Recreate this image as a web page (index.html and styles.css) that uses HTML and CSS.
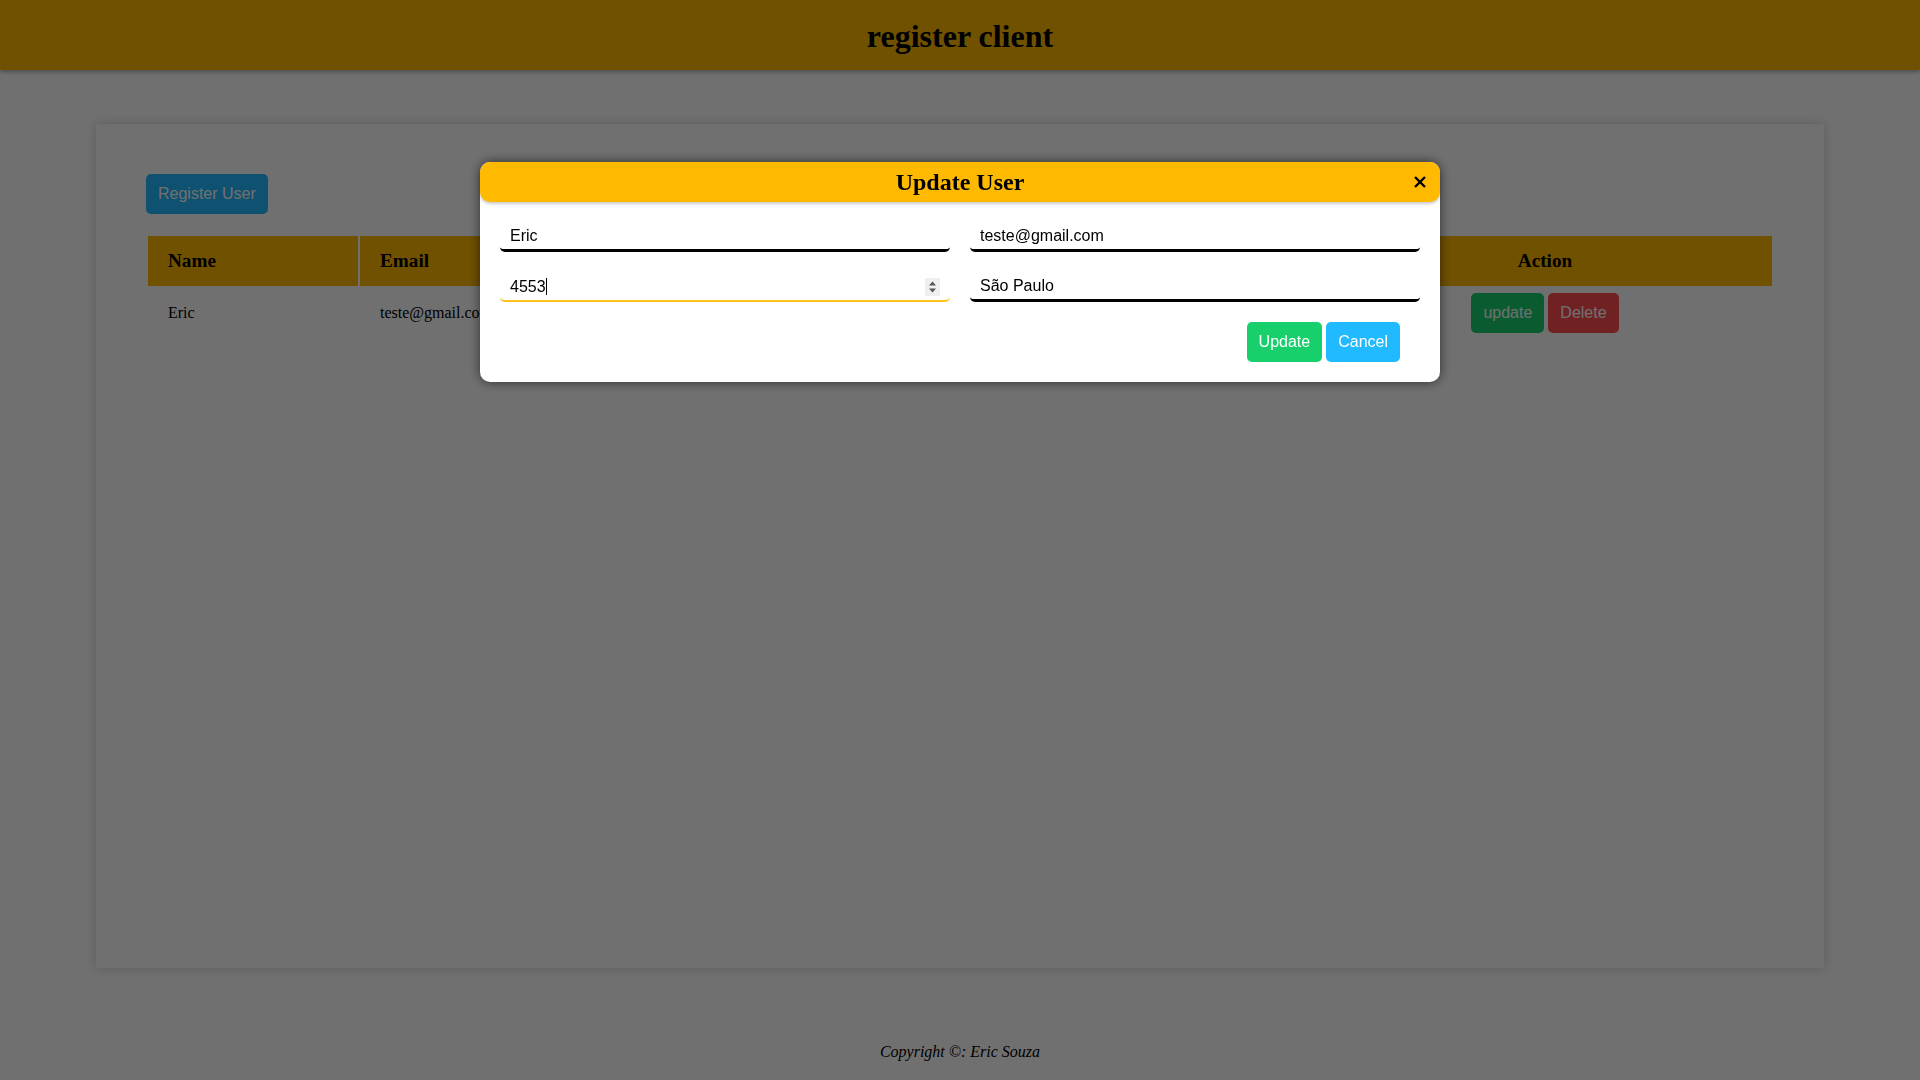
FILE: index.html
```html
<!DOCTYPE html>
<html lang="en">
<head>
<meta charset="utf-8">
<title>register client</title>
<link rel="stylesheet" href="styles.css">
</head>
<body>
<header class="topbar">
  <h1 class="topbar__title">register client</h1>
</header>

<main class="page">
  <section class="card">
    <div class="toolbar">
      <button class="btn btn--blue">Register User</button>
    </div>
    <table class="users">
      <colgroup>
        <col class="col-name">
        <col class="col-email">
        <col class="col-phone">
        <col class="col-city">
        <col class="col-action">
      </colgroup>
      <thead>
        <tr>
          <th>Name</th>
          <th>Email</th>
          <th>Phone</th>
          <th>City</th>
          <th class="cell--center">Action</th>
        </tr>
      </thead>
      <tbody>
        <tr>
          <td>Eric</td>
          <td>teste@gmail.com</td>
          <td>4553</td>
          <td>São Paulo</td>
          <td class="cell--center">
            <div class="row-actions">
              <button class="btn btn--green">update</button>
              <button class="btn btn--red">Delete</button>
            </div>
          </td>
        </tr>
      </tbody>
    </table>
  </section>
</main>

<footer class="footer">Copyright ©: Eric Souza</footer>

<div class="overlay"></div>

<div class="modal">
  <div class="modal__head">
    <h2 class="modal__title">Update User</h2>
    <button class="modal__close" aria-label="close">
      <svg width="12" height="12" viewBox="0 0 12 12"><path d="M1 1 L11 11 M11 1 L1 11" stroke="#000" stroke-width="2.4" stroke-linecap="butt"/></svg>
    </button>
  </div>
  <div class="modal__body">
    <div class="form-grid">
      <div class="field"><input class="field__input" type="text" value="Eric"></div>
      <div class="field"><input class="field__input" type="text" value="teste@gmail.com"></div>
      <div class="field">
        <input class="field__input field__input--focus" type="text" value="4553">
        <span class="caret"></span>
        <span class="spinner">
          <svg width="15" height="18" viewBox="0 0 15 18"><path d="M4 7.5 L7.5 3.5 L11 7.5 Z M4 10.5 L7.5 14.5 L11 10.5 Z" fill="#555"/></svg>
        </span>
      </div>
      <div class="field"><input class="field__input" type="text" value="São Paulo"></div>
    </div>
    <div class="actions">
      <button class="btn btn--green">Update</button>
      <button class="btn btn--blue">Cancel</button>
    </div>
  </div>
</div>
</body>
</html>
```

FILE: styles.css
```css
html, body {
  margin: 0;
  padding: 0;
}

body {
  font-family: "Liberation Serif", "Times New Roman", serif;
  font-size: 16px;
  color: #000;
  background: #fff;
  min-height: 100vh;
}

.topbar {
  height: 70px;
  background: #ffb900;
  display: flex;
  align-items: center;
  justify-content: center;
  box-shadow: 0 2px 4px rgba(0, 0, 0, 0.3);
}

.topbar__title {
  margin: 0;
  font-size: 32px;
  font-weight: bold;
  position: relative;
  top: 1px;
}

.page {
  padding: 54px 96px 0;
}

.card {
  height: 844px;
  box-sizing: border-box;
  padding: 50px;
  background: #fff;
  box-shadow: 0 0 10px rgba(0, 0, 0, 0.18);
}

.toolbar {
  display: flex;
}

.btn {
  font-family: "Liberation Sans", Arial, sans-serif;
  font-size: 16px;
  line-height: 18px;
  color: #fff;
  border: none;
  border-radius: 5px;
  padding: 11px 12px;
  cursor: pointer;
}

.btn--blue { background: #21b9ff; }
.btn--green { background: #17cf6b; }
.btn--red { background: #ff4f4f; }

.users {
  width: 100%;
  margin-top: 20px;
  table-layout: fixed;
  border-spacing: 2px;
}

.col-name { width: 210px; }
.col-email { width: 318px; }
.col-phone { width: 317px; }
.col-city { width: 317px; }
.col-action { width: 454px; }

.users th {
  background: #ffb900;
  font-size: 1.2em;
  line-height: 22px;
  padding: 14px 20px;
  text-align: left;
  font-weight: bold;
}

.users td {
  padding: 5px 20px;
  line-height: 40px;
  white-space: nowrap;
  overflow: hidden;
}

.users .cell--center {
  text-align: center;
}

.row-actions {
  display: flex;
  justify-content: center;
  gap: 4px;
}

.footer {
  padding-top: 75px;
  text-align: center;
  font-style: italic;
  line-height: 18px;
}

.overlay {
  position: fixed;
  inset: 0;
  background: rgba(0, 0, 0, 0.56);
}

.modal {
  position: fixed;
  top: 162px;
  left: 25%;
  width: 50%;
  background: #fff;
  border-radius: 10px;
  box-shadow: 0 0 12px rgba(0, 0, 0, 0.6);
}

.modal__head {
  position: relative;
  height: 40px;
  background: #ffba00;
  border-radius: 10px;
  display: flex;
  align-items: center;
  justify-content: center;
  box-shadow: 0 2px 3px rgba(0, 0, 0, 0.2);
}

.modal__title {
  margin: 0;
  font-size: 24px;
  font-weight: bold;
}

.modal__close {
  position: absolute;
  right: 14px;
  top: 14px;
  width: 12px;
  height: 12px;
  padding: 0;
  border: none;
  background: transparent;
  display: block;
}

.modal__close svg {
  display: block;
}

.modal__body {
  padding: 20px 20px 20px;
}

.form-grid {
  display: grid;
  grid-template-columns: 1fr 1fr;
  column-gap: 20px;
  row-gap: 20px;
}

.field {
  position: relative;
}

.field__input {
  display: block;
  width: 100%;
  height: 30px;
  box-sizing: border-box;
  border: none;
  border-bottom: 3px solid #000;
  border-radius: 5px;
  padding: 0 10px;
  font-family: "Liberation Sans", Arial, sans-serif;
  font-size: 16px;
  color: #000;
  background: #fff;
  outline: none;
}

.field__input--focus {
  border-bottom: 2px solid #ffc21a;
  padding-top: 2px;
}

.caret {
  position: absolute;
  left: 46px;
  top: 6px;
  width: 1px;
  height: 17px;
  background: #000;
}

.spinner {
  position: absolute;
  right: 10px;
  top: 6px;
  width: 15px;
  height: 18px;
  background: #efefef;
}

.spinner svg {
  display: block;
}

.actions {
  display: flex;
  justify-content: flex-end;
  gap: 4px;
  margin-top: 20px;
  padding-right: 20px;
}
```
